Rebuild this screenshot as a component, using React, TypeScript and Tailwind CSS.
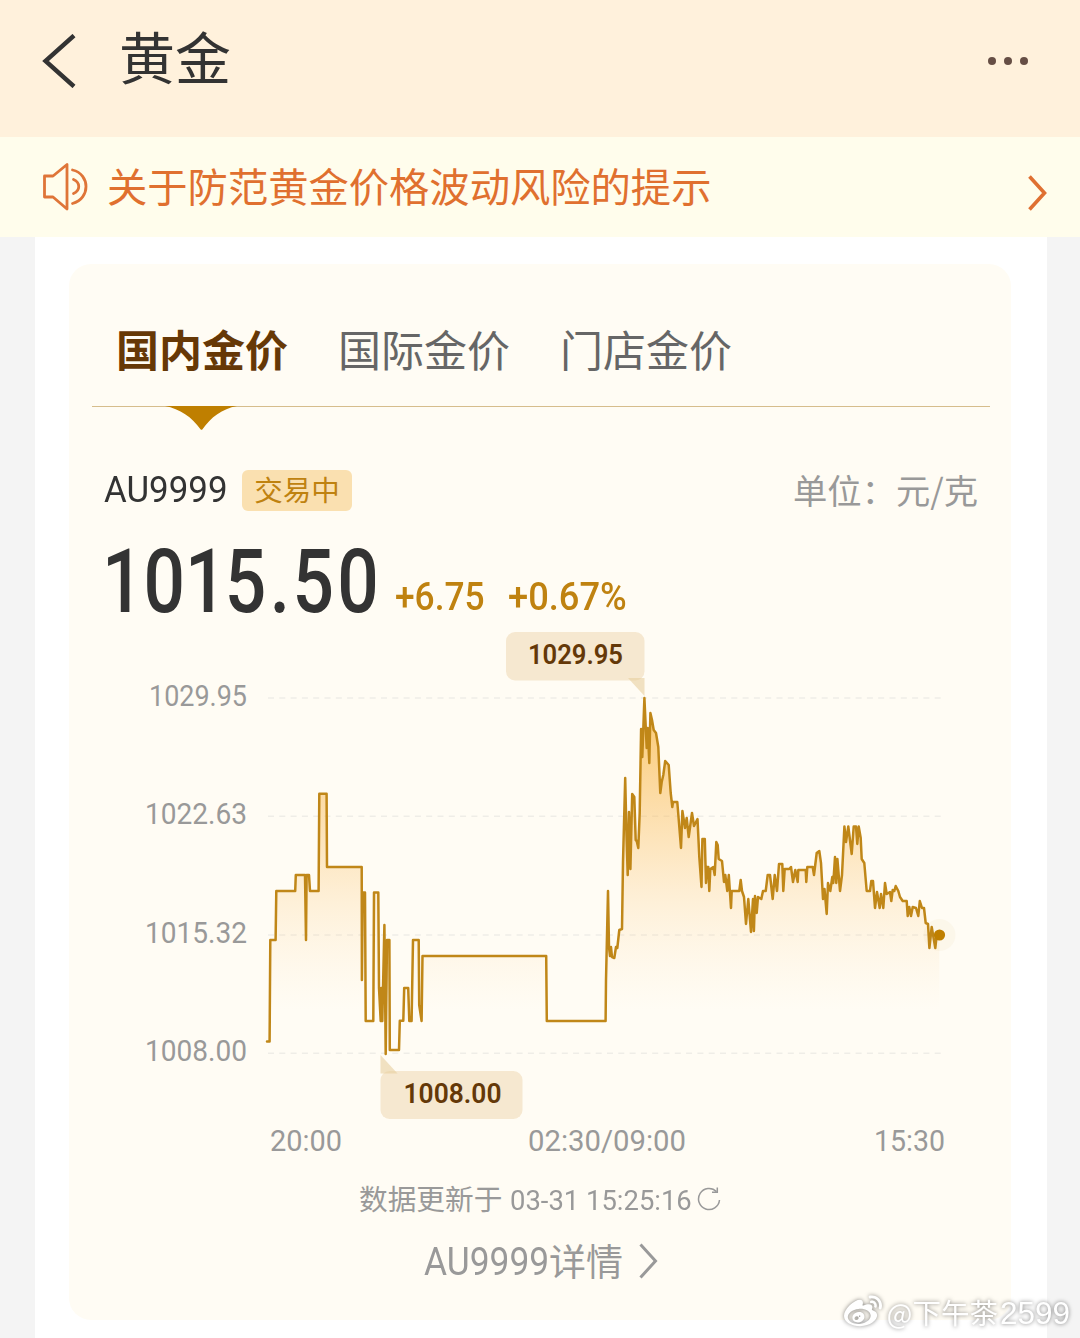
import type { ReactNode } from "react";
import { FaWeibo } from "react-icons/fa";

const PRICE_LINE =
  "267,1041.5 269.6,1041.5 270.3,940 275.6,940 276.3,891 295.2,891 295.8,875 305,875 306,940 306.6,875 309,875 310,891 318.6,891 319.3,793.8 326.6,793.8 327,867 361.7,867 361.9,980 362.8,892.5 365,892.5 365.7,1021 373.3,1021 374,892.5 378.3,892.5 379,988 380.7,1021 381.3,988 382.3,1021 384.4,925 385.7,1054 387,940 389.4,940 389.8,1050 399,1050 399.8,1020.7 403.3,1020.7 404.2,988 408.2,988 409.3,1021 411.6,1021 413,940 418.7,940 419.2,1005 421.6,1021 422.5,956 546.2,956 546.8,1021 605.6,1021 606,980 608,891 609,947 610,956 611,947 612,957 614.3,958 616,947 617.3,948 619.3,930 622,929 623,862 625.2,778 626.3,827 627.7,875 629,812 630.4,869 632.2,794 634.3,797 635.7,840 636.7,841 638.3,848 639.7,813 641.1,729 642.3,757 644.4,698 646.7,748 647.7,728 649.3,763 650.4,713 652,720 653.7,730 656,733 658.3,747 660.3,793 661.7,782 663.3,775 665.2,761 668.7,765 670.7,793 672.3,807 673,802 677.3,802 679,823 681,848 682.4,811 685,828 686.7,818 688.7,837 692,813 694,826 697.5,819 699.3,857 701.5,887 702.4,839 704.8,839 706,883 707,867 708.3,867 709.3,891 710.3,869 713.3,867 714.7,875 716.3,842 717.7,845 718.7,859 722,861 724,882 725.3,875 727.3,891 728.8,875 731,908 731.7,891 739.3,891 740.7,880 742,891 744,897 746,924 748.3,899 751,932 753,899 753.9,931 755,896 756.7,913 758,897 761.3,899 763,891 765.7,891 767.7,875 770,875 772.7,899 774.7,875 777,891 779,864 782.3,864 783.3,891 784.7,869 789.3,869 791,867 793,882 795.3,870 797.7,882 798.3,870 805.7,870 806.3,882 807.3,867 812.7,867 814,875 816.7,853 819.3,851 821,863 823,899 824.5,889 826.7,914 828,883 830.3,891 832.3,877 833.3,883 835,857 836.3,883 837.4,859 840,891 842,875 844.4,826.5 846,842 848.3,826.5 851.7,854 853.7,826.5 856,826.5 857.3,844 858.7,826.5 860.7,838 861.7,859 864.3,863 866.7,891 870,891 871.3,881 873,881 875,908 877,892 879.7,908 881,894 883.3,908 885,883 886.7,894 890,892 891.3,901 892.7,890 894.3,891 895.7,886 898.3,891 900,897 902.7,901 906.7,901 907.7,916 909.3,907 911,916 912.7,907 916,908 918.3,916 919.8,901 922,908 924,908 925.7,923 928,924 929.4,948 931.7,927 935.3,948 936.7,935 939.3,935";

const GRID = [
  { y: 698, label: "1029.95", x: 149, w: 98 },
  { y: 816.3, label: "1022.63", x: 145, w: 102 },
  { y: 935, label: "1015.32", x: 145, w: 102 },
  { y: 1053.3, label: "1008.00", x: 145, w: 102 },
];

const TIMES = [
  { label: "20:00", x: 270, w: 72 },
  { label: "02:30/09:00", x: 528, w: 158 },
  { label: "15:30", x: 874, w: 71 },
];

function ChartText({ x, y, w, children, className }: { x: number; y: number; w: number; children: string; className: string }) {
  return (
    <text x={x} y={y} textLength={w} lengthAdjust="spacingAndGlyphs" className={className}>
      {children}
    </text>
  );
}

function PriceChart() {
  return (
    <svg viewBox="69 620 942 545" className="block h-[545px] w-[942px] shrink-0 font-[Roboto,sans-serif]">
      <defs>
        <linearGradient id="area" gradientUnits="userSpaceOnUse" x1="0" y1="697" x2="0" y2="1010">
          <stop offset="0" stopColor="#f9b63f" stopOpacity="0.75" />
          <stop offset="0.35" stopColor="#f9b850" stopOpacity="0.45" />
          <stop offset="0.65" stopColor="#fabf66" stopOpacity="0.2" />
          <stop offset="1" stopColor="#fdd7a0" stopOpacity="0" />
        </linearGradient>
      </defs>
      {GRID.map((g) => (
        <g key={g.label}>
          <line x1="268" x2="943" y1={g.y} y2={g.y} stroke="#efede7" strokeWidth="1.6" strokeDasharray="6 5.3" />
          <ChartText x={g.x} y={g.y + 8} w={g.w} className="fill-[#999999] text-[30px]">
            {g.label}
          </ChartText>
        </g>
      ))}
      <polygon points={`267,1054 ${PRICE_LINE} 939.3,1054`} fill="url(#area)" />
      <polyline points={PRICE_LINE} fill="none" stroke="#c08718" strokeWidth="2.5" strokeLinejoin="round" strokeLinecap="round" />
      <circle cx="939.5" cy="935" r="16" fill="#bf7f00" fillOpacity="0.04" />
      <circle cx="939.5" cy="935" r="5.6" fill="#bf7f00" />

      <rect x="506" y="632" width="138.500" height="48.500" rx="9" fill="#f6e8d0" />
      <path d="M628 678h16.500v18z" fill="#e8cf9e" fillOpacity="0.6" />
      <ChartText x={528} y={664.3} w={95} className="fill-[#643808] text-[27px] font-semibold">
        1029.95
      </ChartText>

      <rect x="380.500" y="1071" width="142" height="48" rx="9" fill="#f6e8d0" />
      <path d="M380.500 1055v18.500h17z" fill="#e8cf9e" fillOpacity="0.6" />
      <ChartText x={403.5} y={1103} w={98} className="fill-[#643808] text-[27px] font-semibold">
        1008.00
      </ChartText>

      {TIMES.map((t) => (
        <ChartText key={t.label} x={t.x} y={1151} w={t.w} className="fill-[#999999] text-[30px]">
          {t.label}
        </ChartText>
      ))}
    </svg>
  );
}

function Narrow({ className, children }: { className: string; children: ReactNode }) {
  return <span className={`inline-block origin-left whitespace-pre font-[Roboto,sans-serif] ${className}`}>{children}</span>;
}

function Header() {
  return (
    <header className="flex h-[137px] items-start bg-[#fff1dc]">
      <svg viewBox="0 0 34 54" className="ml-[42px] mt-[34px] h-[54px] w-[34px]" fill="none" stroke="#333333" strokeWidth="4.400">
        <path d="M32 1.500L3.500 27L32 52.500" />
      </svg>
      <h1 className="ml-[43px] mt-[17px] text-[56px] leading-[76px] text-[#333333]">黄金</h1>
      <div className="ml-auto mr-[52px] mt-[57px] flex gap-2">
        <i className="size-2 rounded-full bg-[#664e45]" />
        <i className="size-2 rounded-full bg-[#664e45]" />
        <i className="size-2 rounded-full bg-[#664e45]" />
      </div>
    </header>
  );
}

function Notice() {
  return (
    <div className="flex h-[100px] items-center bg-[#fffdec]">
      <svg viewBox="0 0 48 50" className="ml-[42px] h-[50px] w-[48px]" fill="none" stroke="#df7538" strokeWidth="2.800" strokeLinejoin="round" strokeLinecap="round">
        <path d="M2.500 14H11L25 2.500V47L11 35H2.500Z" />
        <path d="M30.500 8C48.500 12 48.500 37 30.500 41.500" />
        <path d="M31.500 17.500C38.500 20.500 38.500 28.500 31.500 31.500" />
      </svg>
      <p className="mb-[5px] ml-[17px] text-[40.300px] leading-[60px] text-[#e0702f]">关于防范黄金价格波动风险的提示</p>
      <svg viewBox="0 0 20 36" className="ml-auto mr-[32px] mt-[11px] h-[36px] w-[20px]" fill="none" stroke="#df7032" strokeWidth="3.600">
        <path d="M1.500 1.500L16.500 18L1.500 34.500" />
      </svg>
    </div>
  );
}

function Tabs() {
  return (
    <nav className="relative ml-[23px] mr-[21px] flex h-[143px] shrink-0 items-start gap-[50px] border-b border-[#d6bd8c] pl-[24px] pt-[52px] text-[43px] leading-[64px] text-[#666666]">
      <span className="font-bold text-[#663806]">国内金价</span>
      <span>国际金价</span>
      <span>门店金价</span>
      <svg viewBox="0 0 72 24" className="absolute left-[73px] top-[142px] h-[24px] w-[72px]">
        <path d="M0 0H72C57 3 46 11 37.500 23.300Q36.500 24.300 35.500 23.300C27 11 15 3 0 0Z" fill="#bf7f00" />
      </svg>
    </nav>
  );
}

function Quote() {
  return (
    <>
      <div className="mt-[56px] flex h-[52px] shrink-0 items-center pl-[35px] pr-[33px]">
        <div className="mb-px w-[138px]">
          <Narrow className="scale-x-[0.93] text-[37.500px] leading-[52px] text-[#333333]">AU9999</Narrow>
        </div>
        <span className="mt-[2px] flex h-[41px] w-[110px] items-center justify-center rounded-md bg-[#fae0b0] pb-px text-[28.500px] text-[#bf8210]">交易中</span>
        <span className="ml-auto text-[34.300px] leading-[52px] text-[#999999]">单位：元/克</span>
      </div>
      <div className="flex h-[97px] shrink-0 items-start pl-[33px]">
        <div className="w-[293px]">
          <Narrow className="mt-[15px] scale-x-[0.825] text-[88.500px] font-medium leading-[104px] text-[#333333]">
            101<span className="-ml-[2px]">5</span><span className="ml-[4px] mr-[3px]">.</span>5<span className="ml-[4px]">0</span>
          </Narrow>
        </div>
        <div className="mt-[56px] w-[113px]">
          <Narrow className="scale-x-[0.93] text-[38px] font-medium leading-[52px] text-[#bf8210]">+6.75</Narrow>
        </div>
        <div className="mt-[56px]">
          <Narrow className="scale-x-[0.955] text-[38px] font-medium leading-[52px] text-[#bf8210]">+0.67%</Narrow>
        </div>
      </div>
    </>
  );
}

function Footer() {
  return (
    <div className="shrink-0 text-[#999999]">
      <div className="mt-[14px] flex h-[40px] items-center pl-[290px]">
        <span className="mb-[3px] text-[28.700px] leading-[40px]">数据更新于</span>
        <div className="ml-[8px] mt-[3px] w-[187px]">
          <Narrow className="scale-x-[0.962] text-[28.500px] leading-[40px]">03-31 15:25:16</Narrow>
        </div>
        <svg viewBox="0 0 24 24" className="h-[24px] w-[24px]" fill="none" stroke="#999999" strokeWidth="1.500">
          <path d="M19.500 4.600A10.500 10.500 0 1 0 22.500 13" />
          <path d="M20.300 0.500V5.300H15" />
        </svg>
      </div>
      <div className="mt-[19px] flex h-[46px] items-center pl-[355px]">
        <div className="mt-[2px] w-[125px]">
          <Narrow className="scale-x-[0.93] text-[38px] leading-[46px]">AU9999</Narrow>
        </div>
        <span className="mb-[3px] text-[37px] leading-[46px]">详情</span>
        <svg viewBox="0 0 20 36" className="ml-[16px] h-[36px] w-[20px]" fill="none" stroke="#999999" strokeWidth="3">
          <path d="M1.500 1.500L16.500 18L1.500 34.500" />
        </svg>
      </div>
    </div>
  );
}

function Watermark() {
  return (
    <div className="absolute bottom-[6px] right-[10px] flex h-[40px] items-center text-white [filter:drop-shadow(0_0_2px_rgba(0,0,0,0.5))]">
      <FaWeibo className="mr-[5px] h-[38px] w-[38px]" />
      <span className="whitespace-nowrap text-[28.500px] leading-[40px]">
        <span className="text-[27px]">@</span>下午茶<span className="ml-[2px] font-['Liberation_Sans',sans-serif] text-[31.500px]">2599</span>
      </span>
    </div>
  );
}

export default function App() {
  return (
    <div className="relative flex h-[1338px] w-[1080px] flex-col overflow-hidden bg-[#f4f4f4] font-['Noto_Sans_CJK_SC',sans-serif]">
      <Header />
      <Notice />
      <main className="ml-[35px] h-[1101px] w-[1012px] bg-white pl-[34px] pt-[27px]">
        <section className="flex h-[1056px] w-[942px] flex-col rounded-[22px] bg-[#fffcf4]">
          <Tabs />
          <Quote />
          <div className="mt-[8px]">
            <PriceChart />
          </div>
          <Footer />
        </section>
      </main>
      <Watermark />
    </div>
  );
}
